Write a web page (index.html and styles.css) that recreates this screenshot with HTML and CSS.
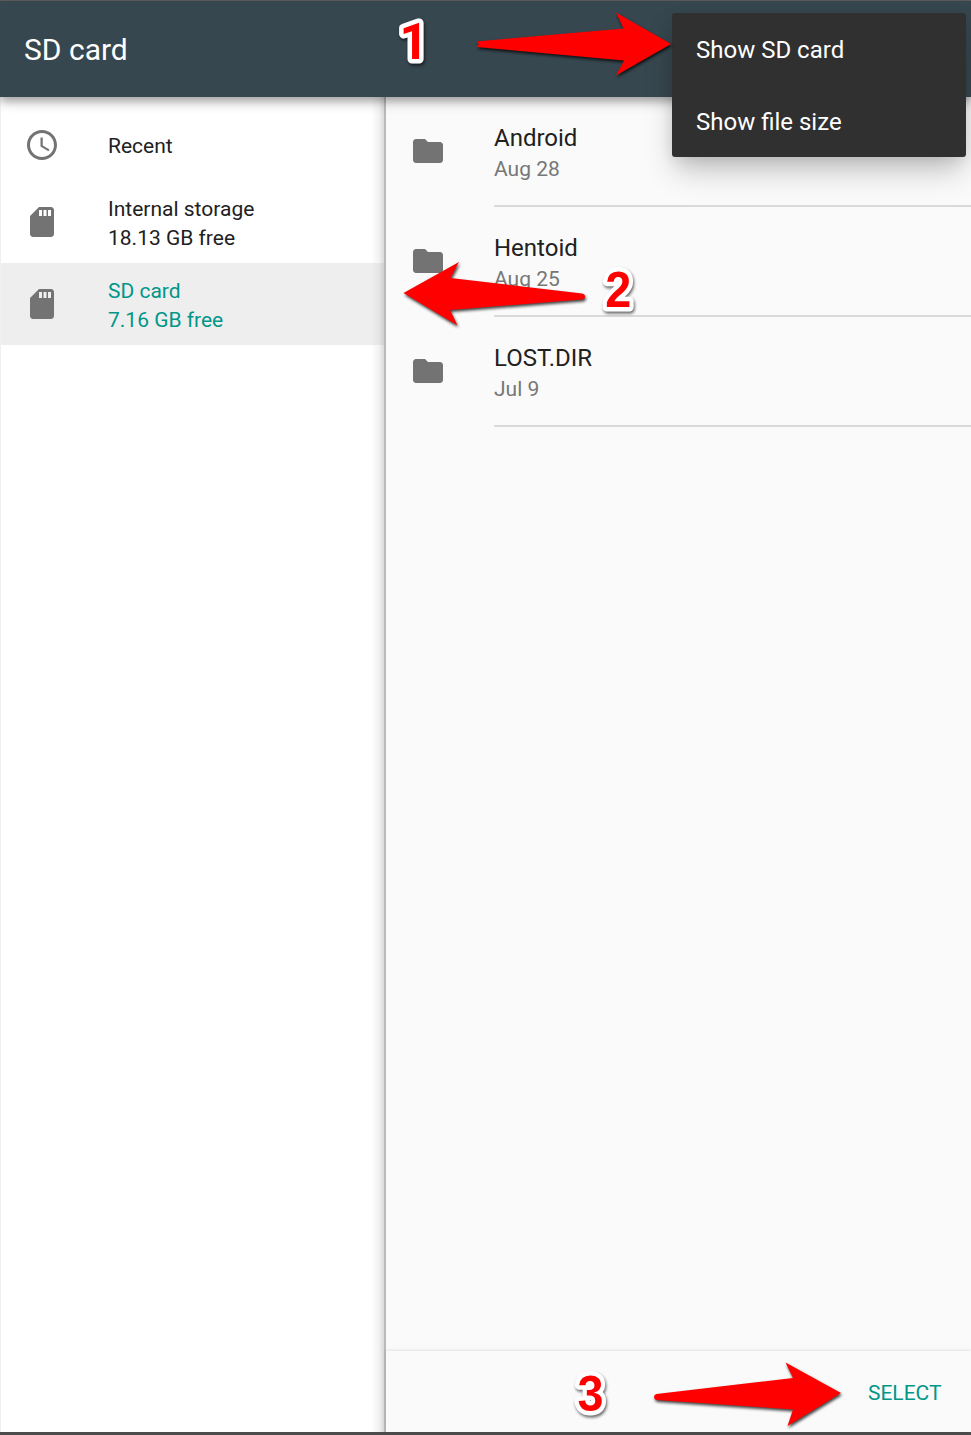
FILE: index.html
```
<!DOCTYPE html>
<html lang="en">
<head>
<meta charset="utf-8">
<title>SD card</title>
<link rel="stylesheet" href="styles.css">
</head>
<body>
<svg class="defs" width="0" height="0" aria-hidden="true">
  <symbol id="folder" viewBox="0 0 24 24"><path d="M10 4H4c-1.1 0-1.99.9-1.99 2L2 18c0 1.1.9 2 2 2h16c1.1 0 2-.9 2-2V8c0-1.1-.9-2-2-2h-8l-2-2z"/></symbol>
  <symbol id="sd" viewBox="0 0 24 24"><path d="M18 2h-8L4.02 8 4 20c0 1.1.9 2 2 2h12c1.1 0 2-.9 2-2V4c0-1.1-.9-2-2-2zm-6 6h-2V4h2v4zm3 0h-2V4h2v4zm3 0h-2V4h2v4z"/></symbol>
  <symbol id="clock" viewBox="0 0 24 24"><path d="M11.99 2C6.47 2 2 6.48 2 12s4.47 10 9.99 10C17.52 22 22 17.52 22 12S17.52 2 11.99 2zM12 20c-4.42 0-8-3.58-8-8s3.58-8 8-8 8 3.58 8 8-3.58 8-8 8zm.5-13H11v6l5.25 3.15.75-1.23-4.5-2.67z"/></symbol>
</svg>
<div class="screen">
  <header class="toolbar"><h1 class="title">SD card</h1></header>
  <div class="body">
    <nav class="roots">
      <div class="root root-single"><svg class="icon"><use href="#clock"/></svg><div class="root-text">Recent</div></div>
      <div class="root"><svg class="icon"><use href="#sd"/></svg><div class="root-text">Internal storage<br>18.13 GB free</div></div>
      <div class="root root-active"><svg class="icon"><use href="#sd"/></svg><div class="root-text">SD card<br>7.16 GB free</div></div>
    </nav>
    <main class="content">
      <div class="files">
        <div class="file"><svg class="icon"><use href="#folder"/></svg><div class="file-text"><div class="name">Android</div><div class="date">Aug 28</div></div></div>
        <div class="file"><svg class="icon"><use href="#folder"/></svg><div class="file-text"><div class="name">Hentoid</div><div class="date">Aug 25</div></div></div>
        <div class="file"><svg class="icon"><use href="#folder"/></svg><div class="file-text"><div class="name">LOST.DIR</div><div class="date">Jul 9</div></div></div>
      </div>
      <footer class="actions"><span class="select">SELECT</span></footer>
    </main>
  </div>
</div>
<div class="menu">
  <div class="menu-item">Show SD card</div>
  <div class="menu-item">Show file size</div>
</div>
<svg class="notes" viewBox="0 0 971 1435">
  <g class="arrows">
    <path d="M476.5 41.500 L623.500 28.500 L616 12.500 L671 44 L616 75.500 L624 60.500 L476.500 47 L479 44.200Z"/>
    <path d="M403.500 293 L459 262 L450.500 278 L582 293.500 Q585 294 585 296.500 Q585 299 582 299.500 L450 310 L457.500 325.500Z"/>
    <path d="M656.500 1394 L793 1378 L785.500 1362.500 L841 1393 L787.500 1426 L793 1409.500 L656.500 1400 Q654 1399.500 654 1397 Q654 1394.500 656.500 1394Z"/>
  </g>
  <g class="digits">
    <text class="digit-one" x="399.500" y="59">1</text>
    <text x="605.300" y="307" textLength="26" lengthAdjust="spacingAndGlyphs">2</text>
    <text x="577.500" y="1410.500" textLength="26" lengthAdjust="spacingAndGlyphs">3</text>
  </g>
</svg>
</body>
</html>
```
FILE: styles.css
```
* { box-sizing: border-box; }
body {
  margin: 0;
  position: relative;
  width: 971px;
  height: 1435px;
  overflow: hidden;
  background: #4d4c4c;
  font-family: Roboto, sans-serif;
  color: #212121;
}
.defs { position: absolute; }
.screen {
  height: 1435px;
  display: flex;
  flex-direction: column;
  border-top: 1px solid #5e5e5c;
  border-bottom: 3px solid #4d4c4c;
}
.toolbar {
  flex: 0 0 96px;
  display: flex;
  align-items: center;
  padding: 2px 24px 0;
  background: #37474f;
  border-top-left-radius: 2px;
  box-shadow: 0 5px 12px rgba(0, 0, 0, .28), 0 4px 6px rgba(0, 0, 0, .12);
  z-index: 1;
}
.title { margin: 0; color: #fff; font-size: 30px; font-weight: 400; line-height: 36px; }
.body { flex: 1; display: flex; min-height: 0; }
.roots {
  width: 386px;
  padding-top: 12px;
  border-left: 1px solid #f0f0f0;
  border-right: 2px solid #b9b9b9;
  background: linear-gradient(to left, rgba(0, 0, 0, .15), rgba(0, 0, 0, .05) 5px, transparent 13px) #fff;
}
.root { height: 82px; display: flex; align-items: center; padding-left: 23px; font-size: 21px; line-height: 29px; }
.root-single { height: 72px; }
.root-active { background: linear-gradient(to left, rgba(0, 0, 0, .13), rgba(0, 0, 0, .04) 5px, transparent 13px) #eee; color: #009688; }
.root-text { margin-left: 48px; padding-top: 4px; }
.root-single .root-text { padding-top: 2px; }
.icon { width: 36px; height: 36px; flex: none; fill: #737373; }
.content { flex: 1; display: flex; flex-direction: column; background: #fafafa; }
.files { flex: 1; }
.file { height: 110px; display: flex; padding-left: 24px; }
.file .icon { margin-top: 36px; }
.file-text { flex: 1; margin-left: 48px; padding-top: 26px; border-bottom: 2px solid #dadada; }
.name { font-size: 24px; line-height: 30px; }
.date { margin-top: 3px; color: #777; font-size: 21px; line-height: 26px; }
.actions {
  height: 81px;
  display: flex;
  align-items: center;
  justify-content: flex-end;
  padding: 3px 29.5px 0 0;
  box-shadow: 0 -1px 3px rgba(0, 0, 0, .1);
}
.select { color: #009688; font-size: 21px; line-height: 28px; }
.menu {
  position: absolute;
  left: 672px;
  top: 13px;
  width: 294px;
  height: 144px;
  border-radius: 3px;
  background: #303030;
  color: #fff;
  z-index: 2;
  box-shadow: 0 16px 28px -4px rgba(0, 0, 0, .25), 0 3px 14px rgba(0, 0, 0, .08);
}
.menu-item { height: 72px; padding: 1px 24px 0; font-size: 24px; line-height: 72px; }
.notes { position: absolute; left: 0; top: 0; width: 971px; height: 1435px; z-index: 3; }
.arrows { fill: #f00; filter: drop-shadow(1px 2px 1.5px rgba(0, 0, 0, .75)); }
.digits {
  fill: #f00;
  stroke: #fff;
  stroke-width: 9px;
  stroke-linejoin: round;
  paint-order: stroke;
  font: bold 50px "Liberation Sans", Arial, sans-serif;
  filter: drop-shadow(1px 2px 1.5px rgba(0, 0, 0, .6));
}
.digit-one { font-family: Roboto, sans-serif; }
```
